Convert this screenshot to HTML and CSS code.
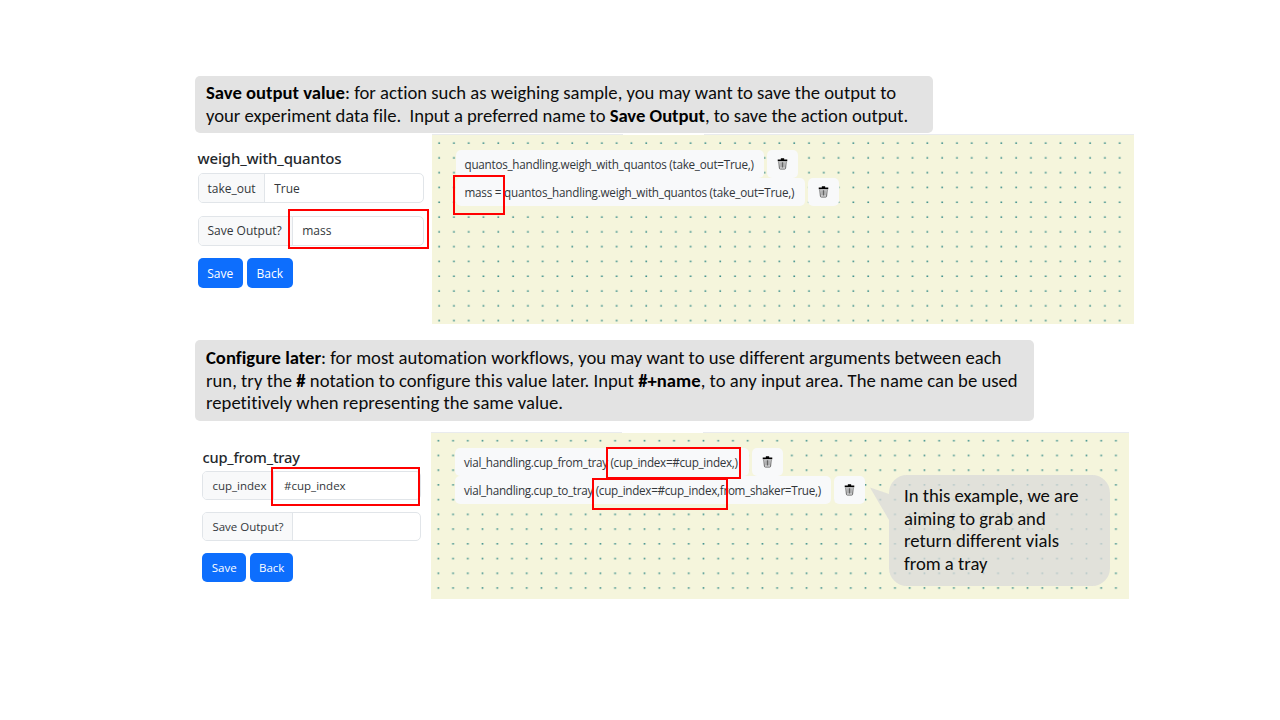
FILE: index.html
```html
<!DOCTYPE html>
<html lang="en">
<head>
<meta charset="utf-8">
<title>Workflow design guide</title>
<link rel="stylesheet" href="styles.css">
</head>
<body>
<svg class="defs" width="0" height="0">
  <symbol id="trash" viewBox="0 0 12 13"><path d="M4.2 1h3.6M.8 2.6h10.4" fill="none" stroke="#000" stroke-width="1.8"/><path d="M2 4l.6 7q.1 1 1 1h4.8q.9 0 1-1L10 4M4.4 4.5v6M6 4.5v6M7.6 4.5v6" fill="none" stroke="#444" stroke-width=".9"/></symbol>
</svg>
<main class="slide">
  <section class="example first">
    <div class="note note-output">
      <div class="line"><b>Save output value</b>: for action such as weighing sample, you may want to save the output to</div>
      <div class="line tight">your experiment data file.&nbsp; Input a preferred name to <b>Save Output</b>, to save the action output.</div>
    </div>
    <div class="workspace">
      <form class="form">
        <h2>weigh_with_quantos</h2>
        <div class="field"><label class="key take">take_out</label><span class="value">True</span></div>
        <div class="field"><label class="key save">Save Output?</label><span class="value">mass</span></div>
        <div class="buttons"><button type="button">Save</button><button type="button">Back</button></div>
      </form>
      <div class="canvas">
        <svg class="dots" width="100%" height="100%"><defs><pattern id="grid1" width="14.795" height="14.795" patternUnits="userSpaceOnUse"><rect x="6.3" y="7.4" width="1.7" height="1.4" fill="#2b8583"/></pattern></defs><rect width="698" height="100%" fill="url(#grid1)"/></svg>
        <i class="tab"></i>
        <div class="row"><span class="chip c1"><span>quantos_handling.weigh_with_quantos (take_out=True,)</span></span><span class="bin gap"><svg><use href="#trash"/></svg></span></div>
        <div class="row"><span class="chip c2"><span>mass = quantos_handling.weigh_with_quantos (take_out=True,)</span></span><span class="bin"><svg><use href="#trash"/></svg></span></div>
      </div>
    </div>
  </section>
  <section class="example second">
    <div class="note note-later">
      <div class="line"><b>Configure later</b>: for most automation workflows, you may want to use different arguments between each</div>
      <div class="line loose">run, try the <b>#</b> notation to configure this value later. Input <b>#+name</b>, to any input area. The name can be used</div>
      <div class="line loose">repetitively when representing the same value.</div>
    </div>
    <div class="workspace">
      <form class="form">
        <h2>cup_from_tray</h2>
        <div class="field"><label class="key cup">cup_index</label><span class="value">#cup_index</span></div>
        <div class="field"><label class="key save">Save Output?</label><span class="value"></span></div>
        <div class="buttons"><button type="button">Save</button><button type="button">Back</button></div>
      </form>
      <div class="canvas">
        <svg class="dots" width="100%" height="100%"><defs><pattern id="grid2" width="14.73" height="14.73" patternUnits="userSpaceOnUse"><rect x="6.5" y="7" width="1.7" height="1.4" fill="#2b8583"/></pattern></defs><rect width="694" height="100%" fill="url(#grid2)"/></svg>
        <i class="tab"></i>
        <div class="row"><span class="chip c3"><span>vial_handling.cup_from_tray (cup_index=#cup_index,)</span></span><span class="bin"><svg><use href="#trash"/></svg></span></div>
        <div class="row"><span class="chip c4"><span>vial_handling.cup_to_tray (cup_index=#cup_index,from_shaker=True,)</span></span><span class="bin"><svg><use href="#trash"/></svg></span></div>
      </div>
    </div>
  </section>
  <div class="bubble">
    <svg class="shape" width="240" height="111"><path d="M37 0H222A18 18 0 0 1 240 18V93A18 18 0 0 1 222 111H37A18 18 0 0 1 19 93V45L0 12.5L19 19V18A18 18 0 0 1 37 0Z" fill="#d9d9d9" fill-opacity=".75"/></svg>
    <div class="line">In this example, we are</div>
    <div class="line">aiming to grab and</div>
    <div class="line">return different vials</div>
    <div class="line">from a tray</div>
  </div>
  <i class="mark m1"></i><i class="mark m2"></i><i class="mark m3"></i><i class="mark m4"></i><i class="mark m5"></i>
</main>
</body>
</html>
```
FILE: styles.css
```css
* { box-sizing: border-box; }
body { margin: 0; background: #fff; }
.defs { position: absolute; }
.slide { position: relative; width: 1280px; height: 720px; padding: 76px 0 0 195px; overflow: hidden; }
.note { background: #e3e3e3; border-radius: 5px; padding: 6px 11px; }
.note-output { width: 738px; height: 57px; }
.note-later { width: 839px; height: 81px; padding-top: 7px; }
.line { font: 18.67px/22.7px Carlito, Lato, sans-serif; font-variant-ligatures: none; color: #0c0c0c; white-space: nowrap; }
.line b { font-weight: 700; color: #000; }
.tight { letter-spacing: -.025px; }
.loose { letter-spacing: .018px; }
.workspace { display: flex; font: 12px/1 "Open Sans", "Noto Sans", sans-serif; color: #33373b; }
.first .workspace { margin-top: 1px; height: 190px; }
.second { margin-top: 16px; }
.second .workspace { margin-top: 11px; height: 167px; }
.form { flex: none; width: 237px; padding: 14px 8px 0 2.5px; }
.second .form { width: 236px; padding: 15px 10.5px 0 7.4px; font-size: 11.5px; }
h2 { margin: 0 0 5px; font: 500 15px/20px "Noto Sans", sans-serif; letter-spacing: -.15px; color: #24282c; white-space: nowrap; }
.second h2 { margin-bottom: 4px; font-size: 14.6px; }
.field { display: flex; height: 30px; margin-bottom: 12.5px; border: 1px solid #e1e5e9; border-radius: 5px; overflow: hidden; }
.second .field { height: 29px; margin-bottom: 12px; }
.key { display: flex; align-items: center; padding: 1px 0 0 9px; background: #f8f9fa; border-right: 1px solid #e1e5e9; white-space: nowrap; }
.take { width: 66px; }
.save { width: 94px; }
.cup { width: 71px; }
.second .save { width: 89.5px; }
.value { display: flex; align-items: center; padding: 1px 0 0 9.7px; }
.buttons { display: flex; gap: 4px; }
button { width: 45.5px; height: 30px; padding: 1px 0 0; border: 0; border-radius: 5px; background: #0d6efd; color: #fff; font: 12px/1 "Open Sans", sans-serif; }
.second button { width: 43.5px; height: 29px; font-size: 11.5px; }
.canvas { position: relative; width: 702px; padding: 15px 0 0 23.5px; background: #f5f5dc; border-top: 1.5px solid #e9ebee; }
.second .canvas { width: 698px; padding-left: 24px; padding-top: 15px; }
.dots { position: absolute; left: 0; top: 0; }
.tab { position: absolute; left: 191px; top: -1px; width: 81px; height: 1px; background: #fff; }
.row { position: relative; display: flex; height: 28px; }
.chip, .bin { display: flex; align-items: center; background: #f8f9fa; border-radius: 5px; height: 28px; }
.chip { padding: 1px 0 0 9px; white-space: nowrap; font-size: 11.7px; letter-spacing: -.25px; }
.bin { justify-content: center; width: 31px; margin-left: 3px; padding-bottom: 1px; }
.bin.gap { margin-left: 3.5px; }
.bin svg { width: 11px; height: 12px; }
.c1 { width: 308px; }
.c2 { width: 349px; letter-spacing: -.23px; }
.c3 { width: 294px; letter-spacing: -.3px; }
.c4 { width: 376px; letter-spacing: -.3px; }
.bubble { position: absolute; left: 870px; top: 475px; width: 240px; height: 111px; padding: 10px 0 0 34px; }
.bubble .line { position: relative; }
.shape { position: absolute; left: 0; top: 0; }
.mark { position: absolute; border: 2px solid #f00; }
.m1 { left: 288px; top: 209px; width: 141px; height: 40px; }
.m2 { left: 453px; top: 175px; width: 52px; height: 40px; }
.m3 { left: 271px; top: 467px; width: 149px; height: 39px; }
.m4 { left: 606px; top: 447px; width: 135px; height: 32px; }
.m5 { left: 592px; top: 478px; width: 136px; height: 32px; }
```
